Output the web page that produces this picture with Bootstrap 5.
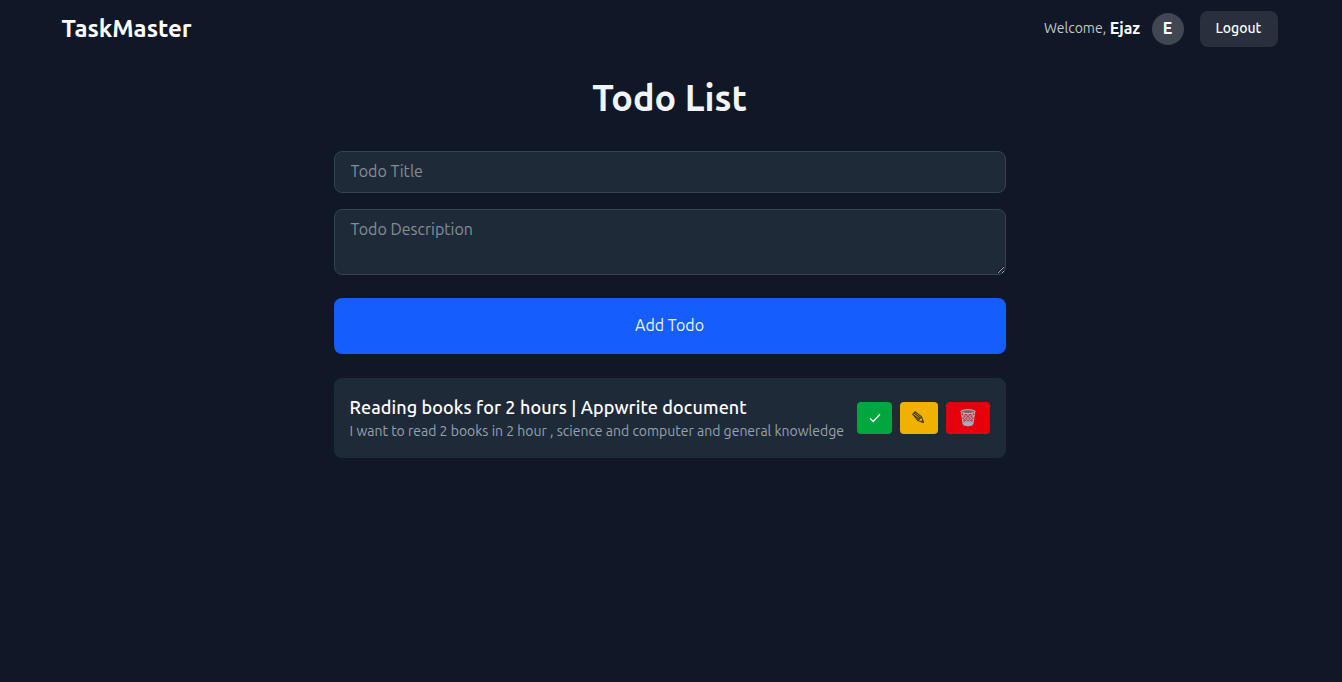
<!DOCTYPE html>
<html lang="en" data-bs-theme="dark">
<head>
<meta charset="utf-8">
<meta name="viewport" content="width=device-width, initial-scale=1">
<title>TaskMaster</title>
<link href="https://cdn.jsdelivr.net/npm/bootstrap@5.3.0/dist/css/bootstrap.min.css" rel="stylesheet">
<style>
  body { background: #101827; color: #fff; font-family: Ubuntu, "Noto Sans", "Open Sans", sans-serif; }
  .topbar { width: 1216px; height: 56px; margin-left: 61.6px; padding-top: 1px; }
  .brand { font-size: 24px; line-height: 32px; font-weight: 600; }
  .welcome { font-size: 14px; line-height: 24px; font-weight: 400; color: #c3c8cf; white-space: nowrap; margin-top: -2px; }
  .user-name { font-size: 16px; line-height: 24px; font-weight: 600; color: #fff; margin: -2px 11.4px 0 3.6px; }
  .avatar { width: 32px; height: 32px; background: #404652; font-weight: 600; font-size: 16px; padding-bottom: 1px; }
  .logout { width: 78px; height: 36px; background: #282f3d; color: #fff; border: 0; border-radius: 8px; padding: 0 .5px 0 0; font-size: 14px; font-weight: 500; }
  .todo-app { width: 672px; margin-left: 333.6px; }
  .page-title { font-size: 36px; line-height: 40px; font-weight: 600; color: #f3f4f6; margin: 22px 0 33px; }
  .field, .field:focus { background: #1f2a39; border: 1px solid #364153; border-radius: 8px; padding: 7px 16px 9px; font-size: 16px; line-height: 24px; font-weight: 400; color: #fff; }
  .field::placeholder { color: #858d94; opacity: 1; }
  .title-field { height: 42px; }
  .desc-field, .desc-field:focus { height: 66px; min-height: 0; }
  .add-btn { height: 56px; background: #155dfc; color: #eef3ff; border: 0; border-radius: 8px; font-size: 16px; font-weight: 400; padding-bottom: 8px; margin-top: 23px; }
  .todo-item { background: #1f2a39; border-radius: 8px; height: 80px; padding: 0 16px; }
  .todo-name { font-size: 18px; line-height: 24px; font-weight: 500; letter-spacing: .1px; white-space: nowrap; margin: 0; padding-bottom: 2px; }
  .todo-text { font-size: 14px; line-height: 20px; font-weight: 400; color: #99a1af; white-space: nowrap; margin: 0 0 1px; }
  .act { height: 32px; border: 0; border-radius: 4px; padding: 0; display: flex; align-items: center; justify-content: center; }
  .act-done { width: 35px; background: #00a63e; padding-left: 1px; }
  .act-edit { width: 38px; background: #f0b100; padding: 0 1px 2px 0; }
  .act-del { width: 44px; background: #e7000b; }
</style>
</head>
<body>
<nav class="topbar d-flex align-items-center justify-content-between">
  <span class="brand">TaskMaster</span>
  <div class="d-flex align-items-center">
    <span class="welcome">Welcome,</span>
    <span class="user-name">Ejaz</span>
    <span class="avatar rounded-circle d-flex align-items-center justify-content-center me-3">E</span>
    <button class="btn logout" type="button">Logout</button>
  </div>
</nav>
<main class="todo-app">
  <h1 class="page-title text-center">Todo List</h1>
  <input class="form-control field title-field mb-3" placeholder="Todo Title">
  <textarea class="form-control field desc-field" placeholder="Todo Description"></textarea>
  <button class="btn add-btn w-100 d-block" type="button">Add Todo</button>
  <section class="todo-item d-flex align-items-center justify-content-between mt-4">
    <div>
      <h2 class="todo-name">Reading books for 2 hours | Appwrite document</h2>
      <p class="todo-text">I want to read 2 books in 2 hour , science and computer and general knowledge</p>
    </div>
    <div class="d-flex gap-2">
      <button class="btn act act-done" type="button" aria-label="Done">
        <svg width="12" height="10" viewBox="0 0 12 10" fill="none" stroke="#fff" stroke-width="1.3"><path d="M1 5.3 4.2 8.5 11 1.2"/></svg>
      </button>
      <button class="btn act act-edit" type="button" aria-label="Edit">
        <svg width="12" height="12" viewBox="0 0 12 12" fill="none" stroke="#4e3d10" stroke-width="1.1"><path d="M.8 3.2 3.2.8 9.6 5.8 11.3 11.3 5.8 9.6ZM2 2l6.8 5.2M1.5 4 7.6 8.5M9.6 5.8 5.8 9.6"/><path d="m9.5 10.7 1.8.6-.6-1.8z" fill="#4e3d10"/></svg>
      </button>
      <button class="btn act act-del" type="button" aria-label="Delete">
        <svg width="16" height="18" viewBox="0 0 16 18"><path d="M1.2 2.5 3.2 15.5Q8 18.5 12.8 15.5L14.8 2.5Z" fill="#c1353f"/><path d="M3 12.5h10l-.6 3.3Q8 18.4 3.6 15.8Z" fill="#7fb9cb"/><g fill="none" stroke="#b4adb5" stroke-width=".9"><path d="M1.2 2.5 3.2 15.7Q8 18.2 12.8 15.7L14.8 2.5M2 6l8 10M3 4l9.5 11M7 4l6.5 8M11 4l3 4M14 6 6 16M13 4 3.5 15M9 4 2.5 12M5 4 2 8"/></g><ellipse cx="8" cy="2.6" rx="7.2" ry="1.9" fill="#8f5961" stroke="#b8bdc3"/></svg>
      </button>
    </div>
  </section>
</main>
<script src="https://cdn.jsdelivr.net/npm/bootstrap@5.3.0/dist/js/bootstrap.bundle.min.js"></script>
</body>
</html>
